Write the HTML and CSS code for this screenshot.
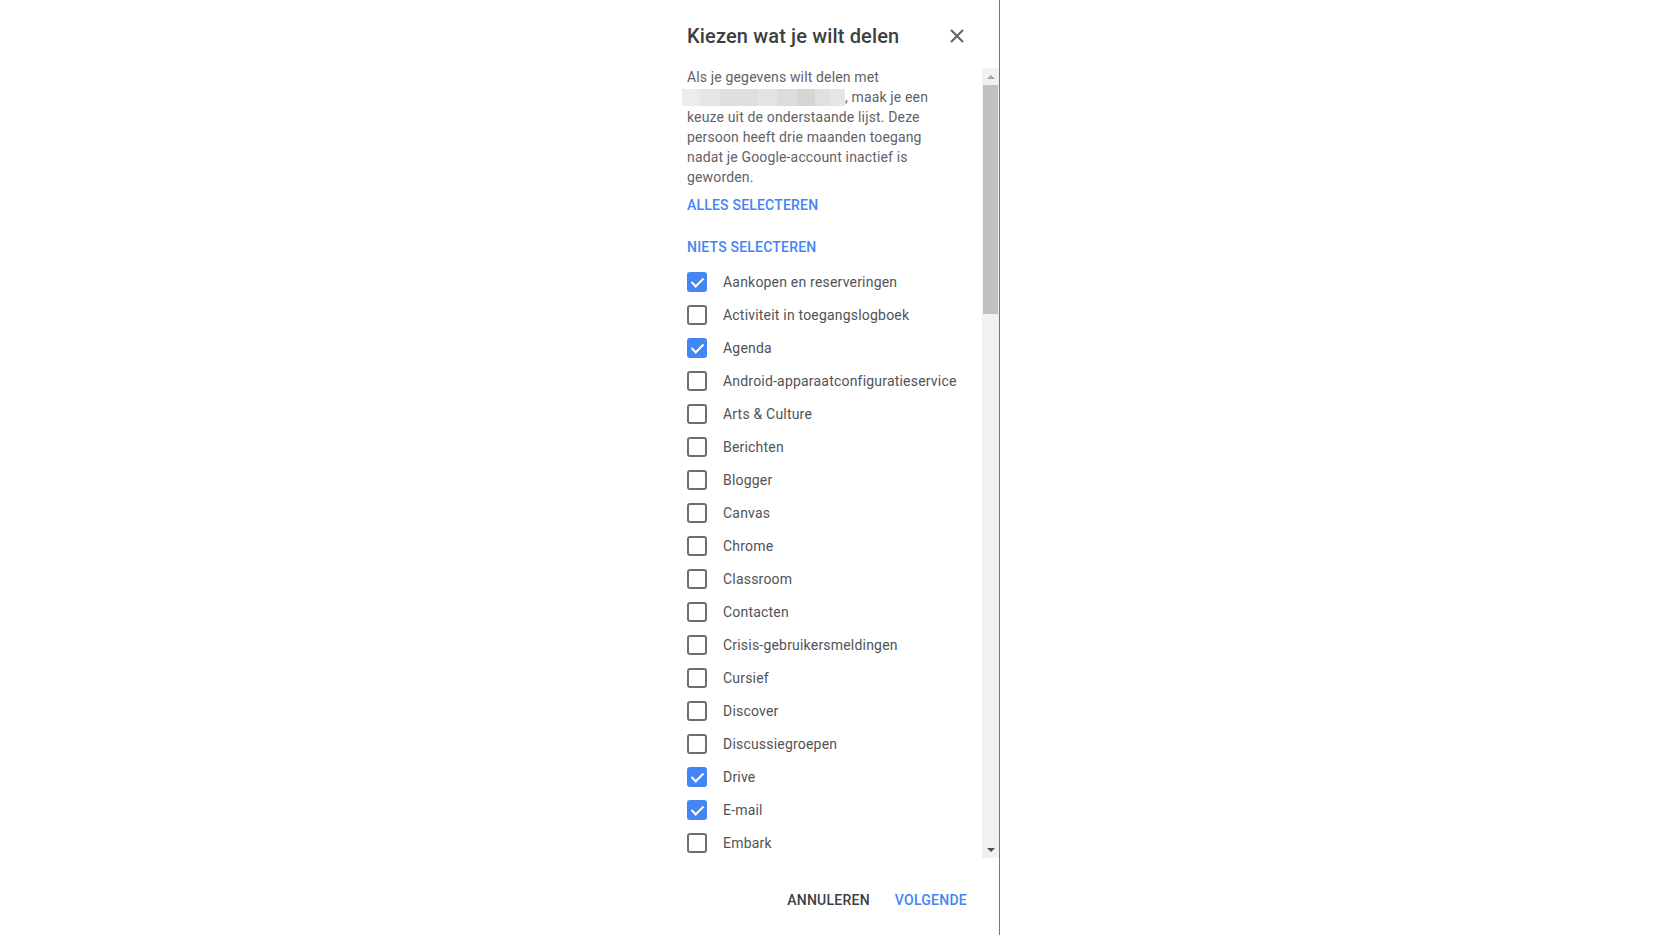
FILE: index.html
```html
<!DOCTYPE html>
<html lang="nl">
<head>
<meta charset="utf-8">
<title>Kiezen wat je wilt delen</title>
<link rel="stylesheet" href="styles.css">
</head>
<body>
<div class="page">
  <div class="dialog">
    <div class="header">
      <h1 class="title">Kiezen wat je wilt delen</h1>
      <button class="close" aria-label="Sluiten">
        <svg width="14" height="14" viewBox="0 0 14 14"><path d="M1 1 L13 13 M13 1 L1 13" stroke="#5f6368" stroke-width="2" fill="none"/></svg>
      </button>
    </div>
    <div class="body">
      <div class="scroll">
        <p class="desc">Als je gegevens wilt delen met <span class="redact"><i class="r1"></i><i class="r2"></i><i class="r3"></i><i class="r4"></i><i class="r5"></i><i class="r6"></i><i class="r7"></i><i class="r8"></i></span>, maak je een keuze uit de onderstaande lijst. Deze persoon heeft drie maanden toegang nadat je Google-account inactief is geworden.</p>
        <div class="link first">ALLES SELECTEREN</div>
        <div class="link second">NIETS SELECTEREN</div>
        <ul class="list">
          <li class="row"><span class="cb on"></span><span class="label">Aankopen en reserveringen</span></li>
          <li class="row"><span class="cb"></span><span class="label">Activiteit in toegangslogboek</span></li>
          <li class="row"><span class="cb on"></span><span class="label">Agenda</span></li>
          <li class="row"><span class="cb"></span><span class="label">Android-apparaatconfiguratieservice</span></li>
          <li class="row"><span class="cb"></span><span class="label">Arts &amp; Culture</span></li>
          <li class="row"><span class="cb"></span><span class="label">Berichten</span></li>
          <li class="row"><span class="cb"></span><span class="label">Blogger</span></li>
          <li class="row"><span class="cb"></span><span class="label">Canvas</span></li>
          <li class="row"><span class="cb"></span><span class="label">Chrome</span></li>
          <li class="row"><span class="cb"></span><span class="label">Classroom</span></li>
          <li class="row"><span class="cb"></span><span class="label">Contacten</span></li>
          <li class="row"><span class="cb"></span><span class="label">Crisis-gebruikersmeldingen</span></li>
          <li class="row"><span class="cb"></span><span class="label">Cursief</span></li>
          <li class="row"><span class="cb"></span><span class="label">Discover</span></li>
          <li class="row"><span class="cb"></span><span class="label">Discussiegroepen</span></li>
          <li class="row"><span class="cb on"></span><span class="label">Drive</span></li>
          <li class="row"><span class="cb on"></span><span class="label">E-mail</span></li>
          <li class="row"><span class="cb"></span><span class="label">Embark</span></li>
        </ul>
      </div>
      <div class="scrollbar">
        <div class="arrow up"></div>
        <div class="track"><div class="thumb"></div></div>
        <div class="arrow down"></div>
      </div>
    </div>
    <div class="footer">
      <button class="btn cancel">ANNULEREN</button>
      <button class="btn next">VOLGENDE</button>
    </div>
  </div>
</div>
</body>
</html>
```

FILE: styles.css
```css
* { box-sizing: border-box; }
html, body { margin: 0; padding: 0; background: #fff; }
body { font-family: Roboto, "Noto Sans", Arial, sans-serif; }

.page {
  height: 935px;
  display: flex;
  padding-left: 663px;
  overflow: hidden;
}

.dialog {
  width: 337px;
  height: 935px;
  border-right: 1px solid #767676;
  display: flex;
  flex-direction: column;
  background: #fff;
}

.header {
  height: 68px;
  display: flex;
  align-items: flex-start;
  justify-content: space-between;
  padding: 22px 35px 0 24px;
}
.title {
  margin: 0;
  font-size: 20px;
  line-height: 28px;
  font-weight: 500;
  color: #3c4043;
  letter-spacing: 0.15px;
}
.close {
  border: 0;
  background: none;
  padding: 0;
  margin-top: 7px;
  width: 14px;
  height: 14px;
  display: flex;
}

.body {
  height: 790px;
  display: flex;
}
.scroll {
  flex: 1;
  overflow: hidden;
  padding-left: 24px;
}
.desc {
  margin: -1px 0 0;
  width: 250px;
  font-size: 14px;
  line-height: 20px;
  color: #5f6368;
  letter-spacing: 0.15px;
}
.redact {
  display: inline-flex;
  vertical-align: -4px;
  height: 17px;
  margin-left: -5px;
}
.redact i { display: block; height: 17px; }
.r1 { width: 18px; background: #ececec; }
.r2 { width: 20px; background: #e6e6e6; }
.r3 { width: 38px; background: #dfdfdf; }
.r4 { width: 19px; background: #e3e3e3; }
.r5 { width: 20px; background: #dcdcdc; }
.r6 { width: 18px; background: #d5d5d5; }
.r7 { width: 15px; background: #e0e0e0; }
.r8 { width: 15px; background: #e6e6e6; }

.link {
  height: 36px;
  display: flex;
  align-items: center;
  font-size: 14px;
  font-weight: 500;
  color: #4285f4;
  letter-spacing: 0.2px;
}
.link.second { margin-top: 6px; }

.list {
  list-style: none;
  margin: 0;
  padding: 0;
}
.row {
  height: 33px;
  display: flex;
  align-items: center;
  gap: 16px;
}
.cb {
  width: 20px;
  height: 20px;
  border: 2px solid #6b6e72;
  border-radius: 3px;
  flex: none;
  position: relative;
}
.cb.on {
  background: #4285f4;
  border-color: #4285f4;
}
.cb.on::after {
  content: "";
  position: absolute;
  left: 5px;
  top: 1px;
  width: 5px;
  height: 10px;
  border: solid #fff;
  border-width: 0 2px 2px 0;
  transform: rotate(45deg);
}
.label {
  font-size: 14px;
  color: #505357;
  letter-spacing: 0.2px;
  white-space: nowrap;
}

.scrollbar {
  width: 17px;
  flex: none;
  background: #f1f1f1;
  display: flex;
  flex-direction: column;
}
.arrow {
  height: 17px;
  flex: none;
  display: flex;
  align-items: center;
  justify-content: center;
}
.arrow::before {
  content: "";
  width: 0;
  height: 0;
  border-left: 4px solid transparent;
  border-right: 4px solid transparent;
}
.arrow.up::before { border-bottom: 4px solid #a3a3a3; }
.arrow.down::before { border-top: 4px solid #505050; }
.track {
  flex: 1;
  padding: 0 1px 0 1px;
}
.thumb {
  height: 229px;
  background: #c1c1c1;
}

.footer {
  flex: 1;
  display: flex;
  justify-content: flex-end;
  align-items: flex-start;
  gap: 9px;
  padding: 24px 24px 0;
}
.btn {
  border: 0;
  background: none;
  height: 36px;
  padding: 0 8px;
  font-family: Roboto, "Noto Sans", Arial, sans-serif;
  font-size: 14px;
  font-weight: 500;
  letter-spacing: 0.25px;
}
.btn.cancel { color: #3c4043; }
.btn.next { color: #4285f4; }
```
